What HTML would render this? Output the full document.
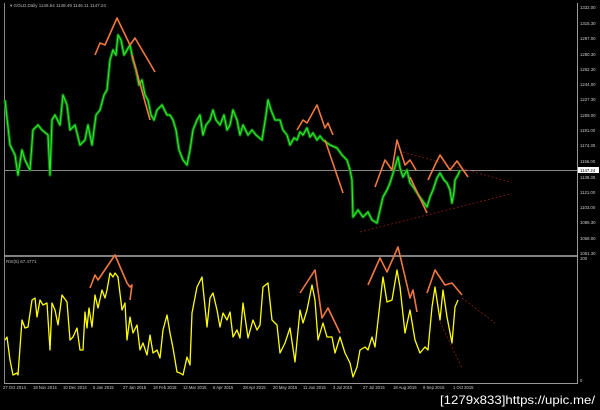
<!DOCTYPE html>
<html><head><style>
html,body{margin:0;padding:0;background:#000;width:600px;height:410px;overflow:hidden}
svg{display:block}
text{font-family:"Liberation Sans",sans-serif}
</style></head><body>
<svg width="600" height="410" viewBox="0 0 600 410">
<rect width="600" height="410" fill="#000"/>
<line x1="4.5" y1="3" x2="4.5" y2="383" stroke="#888" stroke-width="1"/>
<line x1="577.5" y1="3" x2="577.5" y2="383" stroke="#999" stroke-width="1"/>
<line x1="4" y1="383.5" x2="578" y2="383.5" stroke="#999" stroke-width="1"/>
<line x1="4" y1="256" x2="578" y2="256" stroke="#aaa" stroke-width="1.5"/>
<line x1="4" y1="170.5" x2="577" y2="170.5" stroke="#888" stroke-width="1"/>
<text x="10" y="7" fill="#bbb" font-size="4.5">▾ GOLD,Daily  1146.54 1148.49 1146.11 1147.24</text>
<text x="6" y="263" fill="#bbb" font-size="4.5">RSI(5) 67.4771</text>
<g fill="#ccc" font-size="4.3">
<text x="580" y="9">1332.00</text><text x="580" y="25">1315.30</text><text x="580" y="40">1297.00</text>
<text x="580" y="56">1280.30</text><text x="580" y="71">1262.30</text><text x="580" y="86">1244.00</text>
<text x="580" y="101">1227.30</text><text x="580" y="117">1209.00</text><text x="580" y="132">1191.00</text>
<text x="580" y="147">1174.30</text><text x="580" y="163">1156.00</text><text x="580" y="179">1139.30</text>
<text x="580" y="194">1121.00</text><text x="580" y="209">1103.00</text><text x="580" y="224">1086.30</text>
<text x="580" y="240">1068.00</text><text x="580" y="255">1051.30</text><text x="580" y="260">100</text>
<text x="580" y="382">0</text>
</g>
<rect x="578" y="167" width="21" height="6" fill="#fff"/>
<text x="580" y="172" fill="#000" font-size="4.3">1147.24</text>
<g fill="#ccc" font-size="4.2">
<text x="3" y="389">27 Oct 2014</text><text x="33" y="389">18 Nov 2014</text><text x="63" y="389">10 Dec 2014</text>
<text x="93" y="389">5 Jan 2015</text><text x="123" y="389">27 Jan 2015</text><text x="153" y="389">18 Feb 2015</text>
<text x="183" y="389">12 Mar 2015</text><text x="213" y="389">6 Apr 2015</text><text x="243" y="389">28 Apr 2015</text>
<text x="273" y="389">20 May 2015</text><text x="303" y="389">11 Jun 2015</text><text x="333" y="389">3 Jul 2015</text>
<text x="363" y="389">27 Jul 2015</text><text x="393" y="389">18 Aug 2015</text><text x="423" y="389">9 Sep 2015</text>
<text x="453" y="389">1 Oct 2015</text>
</g>
<polyline fill="none" stroke="#0a7a0a" stroke-width="3" stroke-linejoin="round" points="5,100 10,145 15,155 18,175 22,150 25,160 30,170 33,130 38,125 42,130 48,135 50,175 52,120 55,115 60,125 63,95 67,105 70,130 75,125 80,145 85,140 88,125 92,145 96,115 100,110 104,95 107,90 110,60 113,50 116,55 118,35 121,40 124,55 127,50 130,45 133,60 136,70 139,85 142,80 145,95 148,100 151,115 154,120 157,110 162,105 167,115 170,115 173,120 176,130 179,150 183,160 187,165 190,150 193,130 197,120 200,115 203,135 206,125 210,120 213,110 216,120 220,125 224,115 227,130 230,125 233,110 237,120 240,135 243,125 248,135 252,130 256,135 262,140 266,115 268,100 271,110 275,120 280,120 283,130 287,135 290,145 294,138 297,140 300,132 303,135 307,128 310,137 313,133 317,140 320,136 323,140 330,145 337,148 342,155 347,160 350,170 352,180 353,217 358,210 363,217 368,212 372,220 377,223 380,210 383,197 387,190 390,183 394,170 398,157 400,168 403,177 407,170 410,183 414,188 417,193 422,200 427,207 430,197 433,190 437,178 440,173 444,180 447,183 450,190 452,203 454,192 455,180 458,175 460,170"/>
<polyline fill="none" stroke="#33ee33" stroke-width="1" stroke-linejoin="round" points="5,100 10,145 15,155 18,175 22,150 25,160 30,170 33,130 38,125 42,130 48,135 50,175 52,120 55,115 60,125 63,95 67,105 70,130 75,125 80,145 85,140 88,125 92,145 96,115 100,110 104,95 107,90 110,60 113,50 116,55 118,35 121,40 124,55 127,50 130,45 133,60 136,70 139,85 142,80 145,95 148,100 151,115 154,120 157,110 162,105 167,115 170,115 173,120 176,130 179,150 183,160 187,165 190,150 193,130 197,120 200,115 203,135 206,125 210,120 213,110 216,120 220,125 224,115 227,130 230,125 233,110 237,120 240,135 243,125 248,135 252,130 256,135 262,140 266,115 268,100 271,110 275,120 280,120 283,130 287,135 290,145 294,138 297,140 300,132 303,135 307,128 310,137 313,133 317,140 320,136 323,140 330,145 337,148 342,155 347,160 350,170 352,180 353,217 358,210 363,217 368,212 372,220 377,223 380,210 383,197 387,190 390,183 394,170 398,157 400,168 403,177 407,170 410,183 414,188 417,193 422,200 427,207 430,197 433,190 437,178 440,173 444,180 447,183 450,190 452,203 454,192 455,180 458,175 460,170"/>
<g stroke="#8a1a1a" stroke-width="0.8" stroke-dasharray="2,2" fill="none">
<line x1="403" y1="152" x2="510" y2="182"/><line x1="360" y1="232" x2="510" y2="194"/>
<line x1="462" y1="298" x2="495" y2="323"/><line x1="440" y1="322" x2="462" y2="368"/>
</g>
<g stroke="#f07840" stroke-width="1.6" fill="none" stroke-linejoin="round">
<polyline points="95,55 100,43 105,45 117,18 130,45 135,38 155,72"/>
<polyline points="132,55 150,120"/>
<polyline points="297,130 303,120 307,123 317,105 325,128 328,123 333,135"/>
<polyline points="325,140 343,193"/>
<polyline points="375,187 385,160 392,170 397,140 405,165 410,160 416,170"/>
<polyline points="410,177 427,213"/>
<polyline points="428,180 435,165 440,155 450,170 457,161 468,177"/>
<polyline points="90,288 95,275 98,280 115,255 127,283 130,287 132,285 130,300"/>
<polyline points="300,293 315,270 322,318 328,308 340,333"/>
<polyline points="368,285 380,258 387,272 398,247 410,298 413,290 417,312"/>
<polyline points="427,293 435,270 445,285 452,283 462,295"/>
</g>
<polyline fill="none" stroke="#ff0" stroke-width="1.3" stroke-linejoin="round" points="5,340 7,337 10,360 13,375 17,373 18,375 22,320 25,328 28,327 32,300 35,298 37,317 40,300 43,305 47,303 50,350 52,303 55,310 58,325 62,295 67,302 70,340 73,337 77,328 80,350 83,350 85,312 87,328 89,308 92,327 95,295 98,308 102,290 105,298 107,290 110,273 113,277 115,273 118,277 122,310 125,303 127,340 130,317 133,333 137,325 140,350 143,343 147,355 150,335 153,353 157,350 160,358 163,330 167,315 170,333 173,348 177,372 180,373 183,375 187,357 190,365 192,313 197,287 202,277 207,327 210,298 213,293 217,310 220,327 223,313 227,320 230,312 233,337 237,330 240,338 243,303 248,338 253,320 257,330 260,325 263,287 268,283 272,320 277,325 280,353 285,343 290,328 295,362 300,310 303,323 307,310 312,285 315,300 318,340 323,323 327,337 332,337 335,353 340,337 345,353 350,363 353,377 357,367 360,350 365,347 368,350 372,337 375,347 380,303 383,277 387,302 392,300 397,270 400,287 405,333 410,310 415,340 420,353 425,347 428,350 432,307 435,287 440,320 443,290 447,317 452,343 455,307 458,300"/>
<text x="440" y="404" fill="#fff" font-size="12" textLength="155" lengthAdjust="spacingAndGlyphs" font-family="Liberation Mono,monospace">[1279x833]https://upic.me/</text>
</svg>
</body></html>
